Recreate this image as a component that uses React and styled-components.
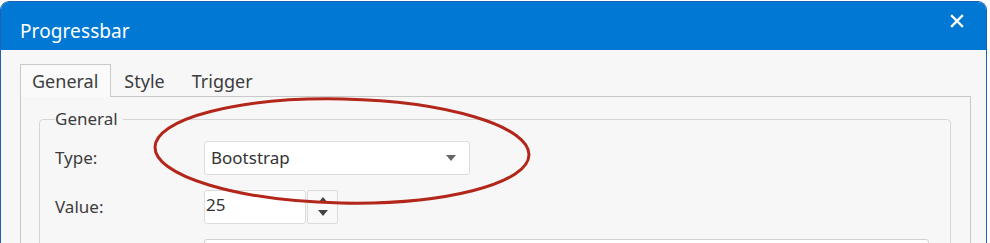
import React from 'react';
import styled, {createGlobalStyle} from 'styled-components';

const GlobalStyle = createGlobalStyle`
  html, body {
    margin: 0;
    padding: 0;
    background: #ffffff;
    overflow: hidden;
  }
  body {
    font-family: "Noto Sans", "Open Sans", "Liberation Sans", sans-serif;
  }
`;

const tabs = ['General', 'Style', 'Trigger'];

const App = () => {
    return (
        <>
            <GlobalStyle/>
            <Dialog>
                <TitleBar>
                    <h1>Progressbar</h1>
                    <CloseButton aria-label='close'>
                        <svg width='14' height='14' viewBox='0 0 14 14'>
                            <path d='M2 2 L12 12 M12 2 L2 12' stroke='#fff' strokeWidth='2.4' strokeLinecap='square'/>
                        </svg>
                    </CloseButton>
                </TitleBar>
                <Body>
                    <TabRow>
                        {tabs.map((tab, i) => (
                            <Tab key={tab} $active={i === 0}>{tab}</Tab>
                        ))}
                    </TabRow>
                    <Panel>
                        <Group>
                            <legend>General</legend>
                            <FieldRow>
                                <Label>Type:</Label>
                                <Select>
                                    <span>Bootstrap</span>
                                    <svg width='10' height='6' viewBox='0 0 10 6'>
                                        <path d='M0 0 H10 L5 6 Z' fill='#666'/>
                                    </svg>
                                </Select>
                            </FieldRow>
                            <FieldRow>
                                <Label>Value:</Label>
                                <NumberBox>25</NumberBox>
                                <Spinner>
                                    <svg width='10' height='6' viewBox='0 0 10 6'>
                                        <path d='M5 0 L10 6 H0 Z' fill='#444'/>
                                    </svg>
                                    <svg width='10' height='6' viewBox='0 0 10 6'>
                                        <path d='M0 0 H10 L5 6 Z' fill='#444'/>
                                    </svg>
                                </Spinner>
                            </FieldRow>
                            <FieldRow>
                                <Label/>
                                <WideBox/>
                            </FieldRow>
                        </Group>
                    </Panel>
                    <Highlight width='384' height='112' viewBox='0 0 384 112'>
                        <ellipse cx='192' cy='56' rx='187' ry='52' fill='none' stroke='#b3261a' strokeWidth='3'
                                 transform='rotate(1.2 192 56)'/>
                    </Highlight>
                </Body>
            </Dialog>
        </>
    );
};

const Dialog = styled.div`
  margin: 1px 1px 0 0;
  width: 987px;
  height: 260px;
  border: 1px solid #1c62b0;
  border-bottom: none;
  border-radius: 9px 9px 0 0;
  overflow: hidden;
  background: #f7f7f7;
  box-sizing: border-box;
`;

const TitleBar = styled.div`
  display: flex;
  align-items: center;
  justify-content: space-between;
  height: 49px;
  padding: 0 19px 0 19px;
  background: #0078d4;
  margin-top: -1px;

  h1 {
    margin: 11px 0 0;
    font-size: 19px;
    font-weight: 400;
    color: #ffffff;
    letter-spacing: 0.1px;
  }
`;

const CloseButton = styled.div`
  display: flex;
  align-items: center;
  justify-content: center;
  width: 20px;
  height: 20px;
  margin-top: -9px;
`;

const Body = styled.div`
  position: relative;
  padding: 14px 18px 0 19px;
`;

const TabRow = styled.div`
  display: flex;
  align-items: flex-end;
  height: 32px;
`;

const Tab = styled.div`
  box-sizing: border-box;
  height: ${({$active}) => ($active ? '33px' : '31px')};
  margin-bottom: ${({$active}) => ($active ? '-1px' : '0')};
  padding: ${({$active}) => ($active ? '0 12px 1px 11px' : '0 13px 1px 12px')};
  display: flex;
  align-items: center;
  font-size: 18px;
  color: #3c3c3c;
  background: ${({$active}) => ($active ? '#fafafa' : 'transparent')};
  border: 1px solid ${({$active}) => ($active ? '#c9c9c9' : 'transparent')};
  border-bottom: none;
  position: relative;
  z-index: 1;
`;

const Panel = styled.div`
  box-sizing: border-box;
  width: 951px;
  height: 200px;
  border: 1px solid #c9c9c9;
  padding: 13px 19px 0 18px;
`;

const Group = styled.fieldset`
  margin: 0;
  padding: 13px 0 0 15px;
  border: 1px solid #d6d6d6;
  border-radius: 4px;
  width: 912px;
  box-sizing: border-box;
  height: 200px;

  legend {
    padding: 0 5px 0 0;
    margin-left: 0;
    font-size: 17px;
    color: #3c3c3c;
    line-height: 18px;
  }
`;

const FieldRow = styled.div`
  display: flex;
  align-items: center;
  height: 33px;
  margin-bottom: 16px;
`;

const Label = styled.div`
  width: 149px;
  font-size: 17px;
  color: #3c3c3c;
`;

const Select = styled.div`
  box-sizing: border-box;
  width: 266px;
  height: 34px;
  display: flex;
  align-items: center;
  justify-content: space-between;
  padding: 0 13px 0 6px;
  border: 1px solid #dcdcdc;
  border-radius: 3px;
  background: #ffffff;
  font-size: 17px;
  color: #333;
`;

const NumberBox = styled.div`
  box-sizing: border-box;
  width: 102px;
  height: 34px;
  padding: 0 1px 4px;
  display: flex;
  align-items: center;
  border: 1px solid #dcdcdc;
  border-radius: 3px;
  background: #ffffff;
  font-size: 17px;
  color: #333;
`;

const Spinner = styled.div`
  box-sizing: border-box;
  width: 31px;
  height: 34px;
  margin-left: 1px;
  display: flex;
  flex-direction: column;
  align-items: center;
  justify-content: center;
  gap: 7px;
  border: 1px solid #dcdcdc;
  border-radius: 2px;
  background: #f9f9f9;
`;

const WideBox = styled.div`
  box-sizing: border-box;
  width: 725px;
  height: 34px;
  border: 1px solid #d0d0d0;
  border-radius: 3px;
  background: #ffffff;
`;

const Highlight = styled.svg`
  position: absolute;
  left: 149px;
  top: 45px;
  pointer-events: none;
`;

export default App;
